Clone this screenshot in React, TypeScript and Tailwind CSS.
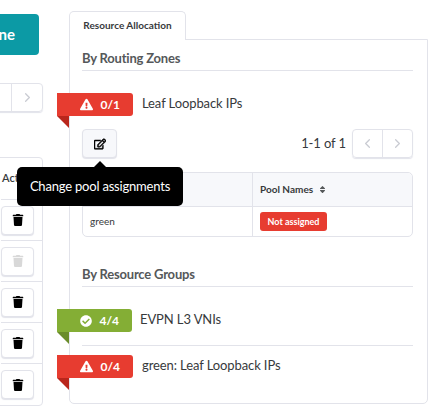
import { ChevronLeft, ChevronRight } from "lucide-react";
import { FaCheckCircle, FaExclamationTriangle, FaRegEdit, FaSort, FaTrash } from "react-icons/fa";

function Ribbon({ kind, label, text }: { kind: "red" | "green"; label: string; text: string }) {
  const red = kind === "red";
  return (
    <div className="flex items-start">
      <div className="relative -ml-[25px] shrink-0">
        <div className={`flex h-[23px] items-center justify-end gap-[7px] rounded-r-[3px] pr-[13px] text-[12px] font-bold text-white ${red ? "w-[76px] bg-[#e73c30]" : "w-[75px] bg-[#84ae35]"}`}>
          {red ? <FaExclamationTriangle className="text-[13px]" /> : <FaCheckCircle className="text-[12px]" />}
          <span>{label}</span>
        </div>
        <div className={`h-0 w-0 border-l-[12px] border-t-[12px] border-l-transparent ${red ? "border-t-[#b9261c]" : "border-t-[#6a8c2a]"}`} />
      </div>
      <span className={`text-[13px] leading-[21px] tracking-[-0.1px] text-[#373a3c] ${red ? "ml-[9px]" : "ml-[8px]"}`}>{text}</span>
    </div>
  );
}

function TrashRow({ disabled }: { disabled?: boolean }) {
  return (
    <div className="flex h-[41px] items-center border-b border-[#e2e3ea] last:border-b-0">
      <div className="flex h-[29px] w-[33px] items-center justify-center rounded-[4px] border border-[#e2e3ea] bg-white shadow-[0_1px_1px_#e2e3ea]">
        <FaTrash className={`text-[12px] ${disabled ? "text-[#d8d8d8]" : "text-black"}`} />
      </div>
    </div>
  );
}

export default function App() {
  return (
    <div className="relative flex h-[414px] w-[440px] overflow-hidden bg-white font-['Lato','Liberation_Sans',sans-serif]">
      <div className="flex w-[69px] shrink-0 flex-col">
        <div className="mt-[14px] -ml-[60px] flex h-[41px] w-[99px] items-center justify-end rounded-[4px] bg-[#0c9aa5] pr-[24px] text-[15px] font-bold text-white">
          Done
        </div>
        <div className="mt-[28px] -ml-[40px] flex h-[29px] w-[83px] rounded-[4px] border border-[#e2e3ea] shadow-[0_1px_1px_#e2e3ea]">
          <div className="flex-1 border-r border-[#e2e3ea]" />
          <div className="flex w-[30px] items-center justify-center text-[#c9cbd2]">
            <ChevronRight size={15} />
          </div>
        </div>
        <div className="mt-[45px] -ml-[20px] w-[63px] rounded-r-[4px] border border-[#e2e3ea] pl-[20px]">
          <div className="flex h-[42px] items-center border-b border-[#e2e3ea] text-[11px] font-semibold text-[#373a3c]">
            <span className="ml-[1px] whitespace-nowrap">Act</span>
          </div>
          <TrashRow />
          <TrashRow disabled />
          <TrashRow />
          <TrashRow />
          <TrashRow />
        </div>
      </div>

      <div className="flex w-[359px] shrink-0 flex-col pt-[11px]">
        <div className="relative z-10 -mb-px flex h-[29px] w-[117px] items-center justify-center rounded-t-[5px] border border-b-0 border-[#e2e3ea] bg-white pb-[1px] text-[10px] font-bold text-[#373a3c]">
          Resource Allocation
        </div>
        <div className="flex h-[365px] flex-col rounded-b-[5px] border border-[#e2e3ea] pl-[12px] pr-[14px]">
          <div className="mt-[10px] border-b border-[#e2e3ea] pb-[3px] text-[13px] font-bold leading-[17px] tracking-[-0.2px] text-[#55585a]">
            By Routing Zones
          </div>
          <div className="mt-[22px]">
            <Ribbon kind="red" label="0/1" text="Leaf Loopback IPs" />
          </div>
          <div className="mt-[1px] flex items-center justify-between">
            <div className="flex h-[29px] w-[35px] items-center justify-center rounded-[4px] border border-[#e2e3ea] bg-[#f7f8fb] shadow-[0_1px_1px_#e2e3ea]">
              <FaRegEdit className="text-[12px] text-black" stroke="currentColor" strokeWidth={24} />
            </div>
            <div className="flex items-center">
              <span className="mr-[6px] text-[13px] tracking-[-0.1px] text-[#373a3c]">1-1 of 1</span>
              <div className="flex h-[29px] w-[61px] rounded-[4px] border border-[#e2e3ea] shadow-[0_1px_1px_#e2e3ea]">
                <div className="flex w-[30px] items-center justify-center border-r border-[#e2e3ea] text-[#c9cbd2]">
                  <ChevronLeft size={15} />
                </div>
                <div className="flex flex-1 items-center justify-center text-[#c9cbd2]">
                  <ChevronRight size={15} />
                </div>
              </div>
            </div>
          </div>
          <div className="mt-[14px] rounded-[5px] border border-[#e2e3ea]">
            <div className="grid h-[34px] grid-cols-[170px_1fr] rounded-t-[5px] border-b border-[#e2e3ea] bg-[#f7f8fb] text-[10px] font-bold text-[#373a3c]">
              <div className="border-r border-[#e2e3ea]" />
              <div className="flex items-center gap-[5px] pl-[7px]">
                Pool Names
                <FaSort className="text-[9px] text-[#55585a]" />
              </div>
            </div>
            <div className="grid h-[29px] grid-cols-[170px_1fr] text-[10px] text-[#373a3c]">
              <div className="flex items-center border-r border-[#e2e3ea] pl-[7px]">green</div>
              <div className="flex items-center pl-[7px]">
                <span className="flex h-[19px] w-[67px] items-center justify-center rounded-[3px] bg-[#e73c30] text-[9px] font-bold text-white">
                  Not assigned
                </span>
              </div>
            </div>
          </div>
          <div className="mt-[29px] border-b border-[#e2e3ea] pb-[3px] text-[13px] font-bold leading-[17px] tracking-[-0.2px] text-[#55585a]">
            By Resource Groups
          </div>
          <div className="mt-[22px] h-[37px] border-b border-[#e2e3ea]">
            <Ribbon kind="green" label="4/4" text="EVPN L3 VNIs" />
          </div>
          <div className="mt-[9px]">
            <Ribbon kind="red" label="0/4" text="green: Leaf Loopback IPs" />
          </div>
        </div>
      </div>

      <div className="absolute left-[17px] top-[167px] z-20 flex h-[39px] w-[166px] items-center justify-center rounded-[5px] bg-black text-[13px] tracking-[-0.2px] text-white">
        Change pool assignments
        <div className="absolute -top-[6px] left-[77px] h-0 w-0 border-x-[6px] border-b-[6px] border-x-transparent border-b-black" />
      </div>
    </div>
  );
}
